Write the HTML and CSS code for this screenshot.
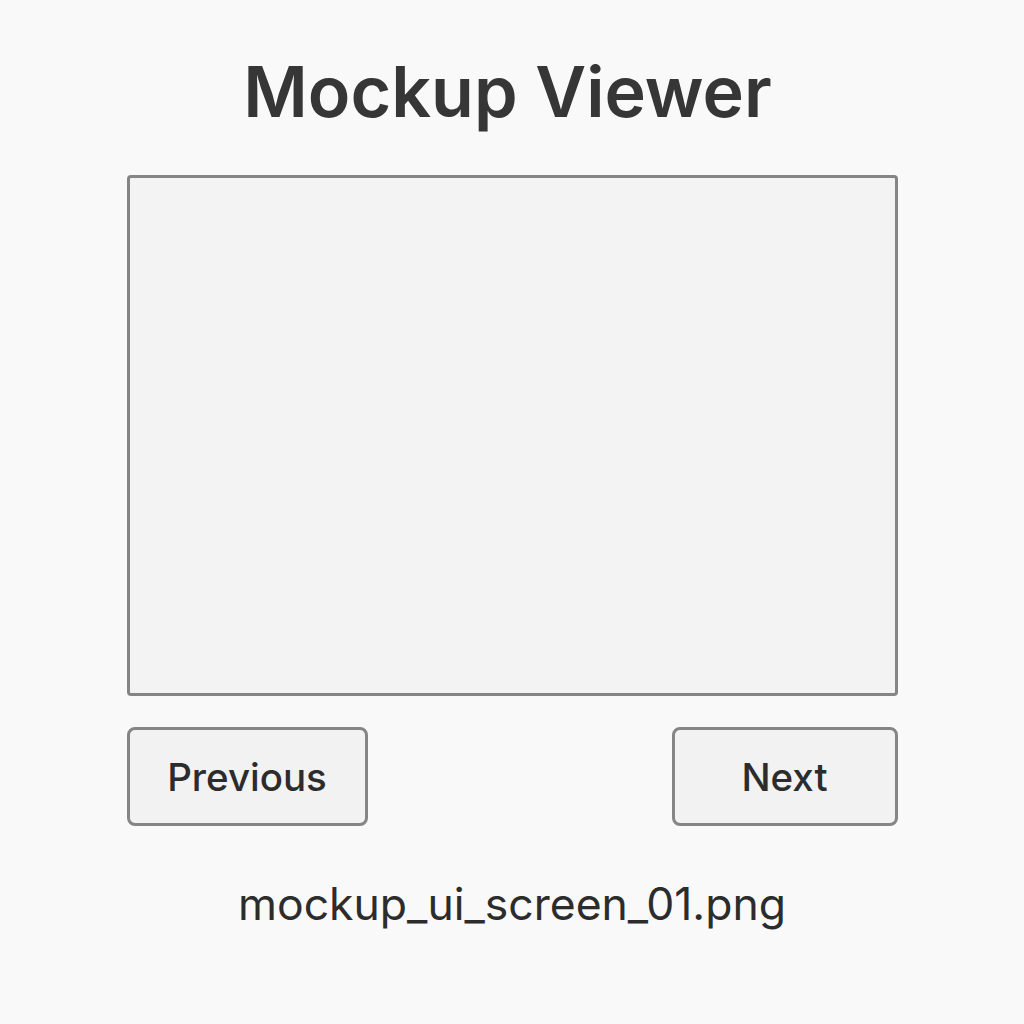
FILE: index.html
```html
<!DOCTYPE html>
<html>
<head>
<meta charset="utf-8">
<link rel="stylesheet" href="styles.css">
</head>
<body>
<main class="viewer">
  <h1 class="title">Mockup Viewer</h1>
  <div class="frame"></div>
  <div class="controls">
    <button class="btn btn-prev">Previous</button>
    <button class="btn btn-next">Next</button>
  </div>
  <p class="filename">mockup_ui_screen_01.png</p>
</main>
</body>
</html>
```
FILE: styles.css
```css
html, body {
  margin: 0;
  padding: 0;
  background: #f9f9f9;
}
body {
  font-family: Inter, "Noto Sans", sans-serif;
  color: #333;
}
.viewer {
  width: 771px;
  margin: 0 auto;
  padding-top: 52px;
  display: flex;
  flex-direction: column;
}
.title {
  margin: 0;
  padding-right: 9px;
  text-align: center;
  font-size: 70px;
  font-weight: 600;
  line-height: 80px;
  color: #363636;
}
.frame {
  margin-top: 43px;
  height: 515px;
  border: 3px solid #858585;
  border-radius: 4px;
  background: #f3f3f3;
}
.controls {
  margin-top: 31px;
  display: flex;
  justify-content: space-between;
}
.btn {
  height: 99px;
  border: 3px solid #858585;
  border-radius: 8px;
  background: #f2f2f2;
  font-family: Inter, "Noto Sans", sans-serif;
  font-size: 38.5px;
  font-weight: 500;
  color: #2c2c2c;
  padding: 0;
}
.btn-prev { width: 241px; }
.btn-next { width: 226px; }
.filename {
  margin: 46px 0 0;
  text-align: center;
  font-size: 44.5px;
  line-height: 64px;
  color: #2c2c2c;
}
```
